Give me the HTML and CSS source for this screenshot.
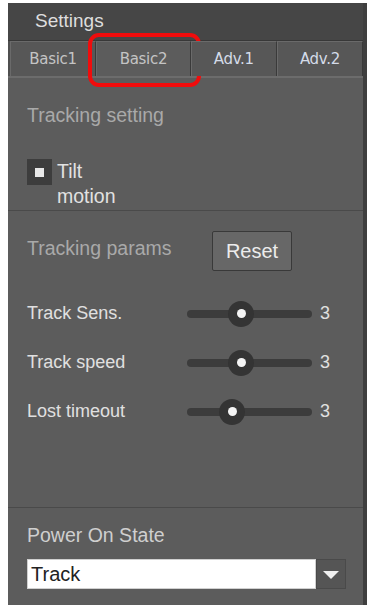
FILE: index.html
```html
<!DOCTYPE html>
<html>
<head>
<link rel="stylesheet" href="styles.css">
</head>
<body>

<div class="panel">
	<div class="title">Settings</div>

	<div class="tabs">
		<div class="tab">Basic1</div>
		<div class="tab active">Basic2<span class="mark"></span></div>
		<div class="tab adv">Adv.1</div>
		<div class="tab adv">Adv.2</div>
	</div>

	<div class="section first">
		<div class="caption">Tracking setting</div>
		<label class="check">
			<span class="box"><span class="tick"></span></span>
			<span class="checktext">Tilt<br>motion</span>
		</label>
	</div>

	<div class="section params">
		<div class="paramhead">
			<div class="caption">Tracking params</div>
			<button class="reset">Reset</button>
		</div>

		<div class="row">
			<span class="label">Track Sens.</span>
			<span class="slider"><span class="knob" style="left: 54px"></span></span>
			<span class="value">3</span>
		</div>
		<div class="row">
			<span class="label">Track speed</span>
			<span class="slider"><span class="knob" style="left: 54px"></span></span>
			<span class="value">3</span>
		</div>
		<div class="row">
			<span class="label">Lost timeout</span>
			<span class="slider"><span class="knob" style="left: 45px"></span></span>
			<span class="value">3</span>
		</div>
	</div>

	<div class="section power">
		<div class="caption light">Power On State</div>
		<div class="select">
			<div class="selectval">Track</div>
			<div class="arrow"></div>
		</div>
	</div>
</div>

</body>
</html>
```

FILE: styles.css
```css
body {
	margin: 0;
	background: #ffffff;
	font-family: "Liberation Sans", Arial, sans-serif;
}

.panel {
	margin: 3px 0 0 8px;
	width: 355px;
	height: 602px;
	background: #5c5c5c;
	border-right: 4px solid #3f3f3f;
	display: flex;
	flex-direction: column;
}

.title {
	height: 37px;
	background: #464646;
	color: #dedede;
	font-size: 19px;
	padding-left: 27px;
	line-height: 36px;
	border-bottom: 1px solid #383838;
}

.tabs {
	display: flex;
	height: 35px;
	padding-left: 2px;
	border-bottom: 2px solid #6c6c6c;
	background: #4f4f4f;
}

.tab {
	position: relative;
	flex: 1;
	text-align: center;
	line-height: 34px;
	font-family: "DejaVu Sans", Tahoma, sans-serif;
	font-size: 15px;
	letter-spacing: -0.3px;
	color: #c4c4c4;
	background: #575757;
	border-left: 1px solid #6a6a6a;
	border-right: 1px solid #3a3a3a;
	border-top: 1px solid #6a6a6a;
}

.tab.active {
	background: #5c5c5c;
	flex: 1.1;
}

.tab.adv {
	color: #d4dbe8;
}

.mark {
	position: absolute;
	left: -9px;
	right: -11px;
	top: -9px;
	bottom: -11px;
	border: 4px solid #f10c0c;
	border-radius: 11px;
}

.section {
	padding: 0 0 0 19px;
}

.first {
	height: 133px;
	border-bottom: 1px solid #4a4a4a;
	padding-top: 26px;
	box-sizing: border-box;
}

.caption {
	font-size: 19.5px;
	color: #a9a9a9;
}

.caption.light {
	color: #cfcfcf;
}

.check {
	display: flex;
	align-items: flex-start;
	margin-top: 32px;
}

.box {
	width: 25px;
	height: 26px;
	background: #3d3d3d;
	display: flex;
	align-items: center;
	justify-content: center;
	margin-right: 5px;
}

.tick {
	width: 9px;
	height: 9px;
	background: #e8e8e8;
}

.checktext {
	font-size: 19.5px;
	color: #e2e2e2;
	line-height: 25px;
}

.params {
	flex: 1;
	border-bottom: 1px solid #4a4a4a;
	padding-top: 20px;
}

.paramhead {
	display: flex;
	align-items: center;
	margin-bottom: 18px;
}

.paramhead .caption {
	width: 185px;
	margin-top: -5px;
}

.reset {
	width: 80px;
	height: 40px;
	background: #676767;
	border: 1px solid #393939;
	border-radius: 2px;
	color: #ececec;
	font-family: "Liberation Sans", Arial, sans-serif;
	font-size: 20px;
	padding: 0;
}

.row {
	display: flex;
	align-items: center;
	height: 49px;
}

.label {
	width: 160px;
	font-size: 18px;
	color: #e0e0e0;
}

.slider {
	position: relative;
	width: 125px;
	height: 8px;
	border-radius: 4px;
	background: #3c3c3c;
}

.knob {
	position: absolute;
	top: -9px;
	width: 26px;
	height: 26px;
	margin-left: -13px;
	border-radius: 50%;
	background: #343434;
	display: flex;
	align-items: center;
	justify-content: center;
}

.knob::after {
	content: "";
	width: 9px;
	height: 9px;
	border-radius: 50%;
	background: #f4f4f4;
}

.value {
	margin-left: 8px;
	font-size: 18px;
	color: #e0e0e0;
}

.power {
	height: 97px;
	padding-top: 16px;
	box-sizing: border-box;
}

.select {
	display: flex;
	margin-top: 12px;
	height: 30px;
}

.selectval {
	width: 284px;
	background: #ffffff;
	border: 1px solid #d0d0d0;
	font-size: 20px;
	color: #222;
	padding-left: 3px;
	line-height: 29px;
}

.arrow {
	width: 28px;
	background: #555555;
	border: 1px solid #4a4a4a;
	display: flex;
	align-items: center;
	justify-content: center;
}

.arrow::after {
	content: "";
	border-left: 8px solid transparent;
	border-right: 8px solid transparent;
	border-top: 8px solid #f0f0f0;
	margin-top: 2px;
}
```
